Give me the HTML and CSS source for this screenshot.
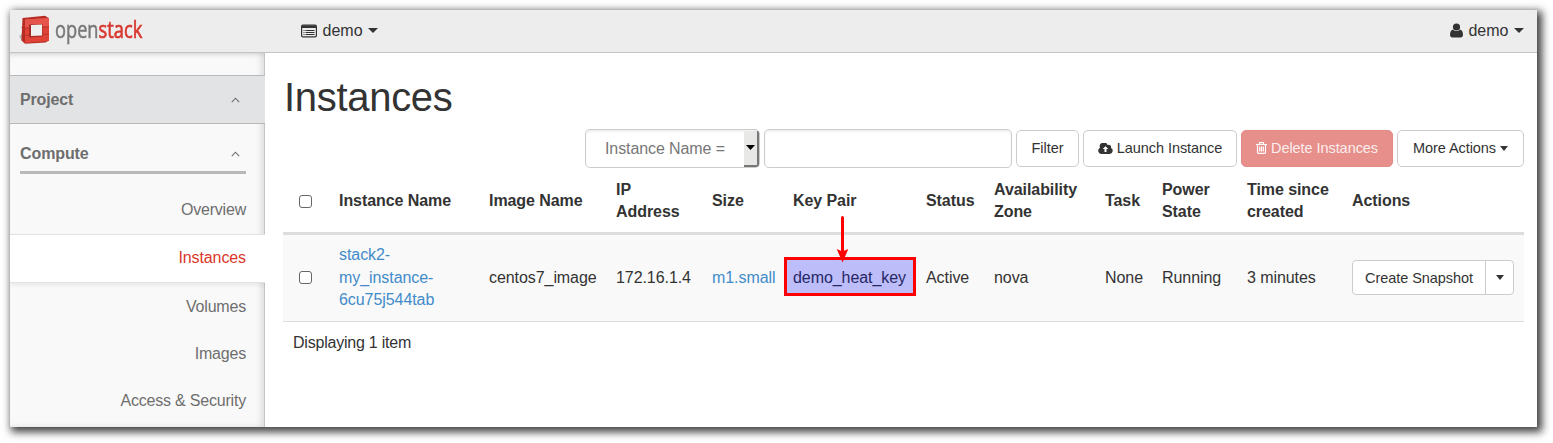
FILE: index.html
```html
<!DOCTYPE html>
<html lang="en">
<head>
<meta charset="utf-8">
<title>Instances - OpenStack Dashboard</title>
<link rel="stylesheet" href="styles.css">
</head>
<body>
<div class="window">
  <header class="topbar">
    <div class="brand">
      <svg class="brand-mark" width="32" height="30" viewBox="0 0 32 30">
        <path d="M0 21l5-2v8l-2-1z" fill="#b5b5b5"/>
        <path d="M3.500 3L26 0.800 30 3.200V25.500L26.500 27.500 6 28.800 2.500 25.500z" fill="#b62c24"/>
        <path d="M6 4.500L30 3V26L6 28z" fill="#df4236"/>
        <path d="M6 4.500L30 3V11L6 12z" fill="#e5554c"/>
        <path d="M10 9.500L23.500 9V21.500L10 22.500z" fill="#a82a22"/>
        <path d="M12 10L23 9.500V20.500L12 21z" fill="#efefef"/>
        <path d="M2.500 12.500L6 13.500 10 13M2.500 19.500L6 20.500 10 20M23.500 12.500L30 12M23.500 19.500L30 19" fill="none" stroke="#b8332a" stroke-width="1"/>
      </svg>
      <div class="brand-name"><span>open</span><span class="brand-red">stack</span></div>
    </div>
    <div class="menu project-menu">
      <svg width="16" height="14" viewBox="0 0 16 14"><rect x=".6" y="1.100" width="14.800" height="11.800" rx="1.300" fill="none" stroke="#333" stroke-width="1.200"/><path d="M1 1.500h14v2.500H1z" fill="#333"/><path d="M2.500 6.500h1M2.500 8.500h1M2.500 10.500h1M4.500 6.500h9M4.500 8.500h9M4.500 10.500h9" stroke="#333"/></svg>
      <span>demo</span><i class="caret"></i>
    </div>
    <div class="menu user-menu">
      <svg width="13" height="15" viewBox="0 0 13 15"><circle cx="6.500" cy="4" r="3.600" fill="#333"/><path d="M3 6.500C1 7 0 9 0 12c0 1.500 1 2.500 2.300 2.500h8.400C12 14.500 13 13.500 13 12c0-3-1-5-3-5.500C8 8.500 5 8.500 3 6.500z" fill="#333"/></svg>
      <span>demo</span><i class="caret"></i>
    </div>
  </header>
  <div class="body">
    <nav class="sidebar">
      <div class="group"><span>Project</span><svg width="9" height="6" viewBox="0 0 9 6"><path d="M.8 5.200L4.500 1.200 8.200 5.200" fill="none" stroke="#6e6e6e" stroke-width="1.100"/></svg></div>
      <div class="subgroup"><span>Compute</span><svg width="9" height="6" viewBox="0 0 9 6"><path d="M.8 5.200L4.500 1.200 8.200 5.200" fill="none" stroke="#6e6e6e" stroke-width="1.100"/></svg></div>
      <a class="item first">Overview</a>
      <a class="item active">Instances</a>
      <a class="item after">Volumes</a>
      <a class="item">Images</a>
      <a class="item">Access &amp; Security</a>
    </nav>
    <main class="content">
      <h1>Instances</h1>
      <div class="toolbar">
        <div class="select"><span>Instance Name =</span><div class="select-button"><svg width="9" height="5" viewBox="0 0 9 5"><path d="M0 0h9L4.500 5z"/></svg></div></div>
        <input class="search" type="text" aria-label="Search">
        <button class="btn filter">Filter</button>
        <button class="btn launch"><svg width="15" height="11" viewBox="0 0 15 11"><path d="M3.300 11A3.300 3.300 0 0 1 2 4.800 4 4 0 0 1 9.500 2 2.500 2.500 0 0 1 13 5 3.200 3.200 0 0 1 12 11z" fill="#333"/><path d="M7.500 3.200L4.700 6.100H6.500V9h2V6.100h1.800z" fill="#fff"/></svg><span>Launch Instance</span></button>
        <button class="btn danger"><svg width="11" height="12" viewBox="0 0 11 12"><path d="M0 2.500h11M3.500 2.300V.7h4v1.600M1.500 3v7.500q0 .8.800.8h6.400q.8 0 .8-.8V3M3.700 4.500v5M5.500 4.500v5M7.300 4.500v5" fill="none" stroke="#fff" stroke-width="1.200"/></svg><span>Delete Instances</span></button>
        <button class="btn more"><span>More Actions</span><i class="caret small"></i></button>
      </div>
      <table>
        <colgroup><col class="c-check"><col class="c-name"><col class="c-image"><col class="c-ip"><col class="c-size"><col class="c-key"><col class="c-status"><col class="c-zone"><col class="c-task"><col class="c-power"><col class="c-time"><col class="c-actions"></colgroup>
        <thead><tr>
          <th><i class="checkbox"></i></th><th>Instance Name</th><th>Image Name</th><th>IP<br>Address</th><th>Size</th><th>Key Pair</th><th>Status</th><th>Availability<br>Zone</th><th>Task</th><th>Power<br>State</th><th>Time since<br>created</th><th>Actions</th>
        </tr></thead>
        <tbody><tr>
          <td><i class="checkbox"></i></td>
          <td><a>stack2-<br>my_instance-<br>6cu75j544tab</a></td>
          <td>centos7_image</td><td>172.16.1.4</td><td><a>m1.small</a></td>
          <td class="key">demo_heat_key<div class="highlight"></div>
            <svg class="arrow" width="13" height="48" viewBox="0 0 13 48"><path d="M6.500 2.500V38" stroke="#f00" stroke-width="3" stroke-linecap="round"/><path d="M6.500 47.500L.7 34l5.800 2.500L12.300 34z" fill="#f00"/></svg></td>
          <td>Active</td><td>nova</td><td>None</td><td>Running</td><td>3 minutes</td>
          <td><div class="split"><button class="snapshot">Create Snapshot</button><button class="toggle" aria-label="More"><i class="caret small"></i></button></div></td>
        </tr></tbody>
      </table>
      <div class="count">Displaying 1 item</div>
    </main>
  </div>
</div>
</body>
</html>
```
FILE: styles.css
```css
* { box-sizing: border-box; }
body { margin: 0; padding: 10px; height: 443px; overflow: hidden; background: #fff; color: #333; font: 16px/22.86px "Liberation Sans", Arial, sans-serif; }
.window { width: 1527px; height: 417px; background: #fff; box-shadow: 3px 3px 8px 2px rgba(0,0,0,.75); display: flex; flex-direction: column; overflow: hidden; }
.topbar { height: 43px; flex: none; background: #ededed; border-bottom: 1px solid #c4c4c4; display: flex; align-items: center; padding: 0 13px 0 9px; }
.brand { display: flex; align-items: center; width: 282px; padding-bottom: 2px; }
.brand-mark { filter: blur(.3px); }
.brand-name { font: 24px/28px "Open Sans", sans-serif; color: #777; margin-left: 4px; padding-bottom: 2px; transform: scaleX(.76); transform-origin: 0 50%; white-space: nowrap; -webkit-text-stroke: .5px #777; }
.brand-red { color: #d9372f; -webkit-text-stroke: .7px #d9372f; }
.menu { display: flex; align-items: center; gap: 6px; }
.project-menu { gap: 5.500px; }
.user-menu { margin-left: auto; gap: 5.500px; }
.caret { width: 0; height: 0; border: 5px solid transparent; border-top-color: #333; border-bottom: 0; }
.caret.small { border-width: 5px 4.500px 0; }
.body { display: flex; flex: 1; min-height: 0; }
.sidebar { width: 255px; flex: none; padding-top: 22px; overflow: hidden; background: #f9f9f9; box-shadow: inset -1px 0 0 #c4c4c4, inset -4px 0 7px -1px rgba(0,0,0,.14), inset 0 4px 5px -3px rgba(0,0,0,.1); color: #6e6e6e; }
.group { height: 49px; background: #e2e3e5; border: solid #b9b9b9; border-width: 1px 0; display: flex; align-items: center; justify-content: space-between; padding: 1px 25px 0 10px; font-weight: bold; letter-spacing: -.15px; }
.subgroup { height: 50px; margin: 0 19px 0 10px; padding: 13px 6px 0 0; border-bottom: 3px solid #b9b9b9; display: flex; align-items: center; justify-content: space-between; font-weight: bold; letter-spacing: -.1px; }
.item { display: flex; align-items: center; justify-content: flex-end; height: 47px; padding: 2px 19px 0 0; letter-spacing: -.2px; }
.item.first { height: 60px; padding-top: 12px; }
.item.active { height: 49px; padding-top: 0; background: #fff; border: solid #e2e2e2; border-width: 1px 0; color: #d9372a; letter-spacing: -.1px; box-shadow: 0 2px 4px rgba(0,0,0,.07); }
.content { width: 1272px; padding: 21px 13px 0 18px; }
h1 { margin: 0; height: 55px; padding-left: 1px; font-weight: normal; font-size: 40px; line-height: 46px; letter-spacing: -.3px; }
.toolbar { display: flex; justify-content: flex-end; gap: 4px; height: 39px; }
.select, .search { height: 39px; border: 1px solid #ccc; border-radius: 5px; background: #fff; box-shadow: inset 0 2px 2px rgba(0,0,0,.06); }
.select { width: 175px; display: flex; justify-content: space-between; align-items: center; padding: 1px 0 1px 19px; color: #777; letter-spacing: -.1px; }
.select span { padding-top: 1px; }
.select-button { width: 15px; height: 36px; background: #e8e8e7; border: solid #777; border-width: 0 2px 2px 0; border-radius: 0 2px 3px 0; display: flex; align-items: center; justify-content: center; }
.search { width: 248px; }
.btn { height: 37px; margin-top: 1px; padding: 0 0 1px; border: 1px solid #ccc; border-radius: 5px; background: #fff; color: #333; font: 14.500px/20px "Liberation Sans", sans-serif; display: flex; align-items: center; justify-content: center; gap: 4px; white-space: nowrap; letter-spacing: -.06px; }
.filter { width: 63px; }
.launch { width: 154px; }
.danger { width: 152px; background: #e78f8b; border-color: #e58985; color: #fbeeee; }
.more { width: 127px; }
table { table-layout: fixed; border-collapse: separate; border-spacing: 0; width: 1241px; }
th, td { padding: 0 0 0 10px; text-align: left; vertical-align: middle; white-space: nowrap; letter-spacing: -.07px; }
th { height: 67px; padding-top: 2px; border-bottom: 3px solid #ddd; line-height: 22px; }
td { height: 87px; background: #f9f9f9; border-bottom: 1px solid #ddd; line-height: 22.500px; }
.c-check { width: 46px; } .c-name { width: 150px; } .c-image { width: 127px; } .c-ip { width: 96px; }
.c-size { width: 81px; } .c-key { width: 133px; } .c-status { width: 68px; } .c-zone { width: 111px; }
.c-task { width: 57px; } .c-power { width: 85px; } .c-time { width: 105px; } .c-actions { width: 182px; }
.checkbox { display: block; width: 13px; height: 13px; margin-left: 6px; border: 1px solid #666; border-radius: 3px; background: #fff; }
td .checkbox { position: relative; top: -1px; }
td a { color: #428bca; }
.key { position: relative; }
.highlight { position: absolute; left: 1px; top: 22px; width: 132px; height: 39px; border: 3px solid #f00; background: rgba(0,0,255,.24); }
.arrow { position: absolute; left: 53px; top: -20px; }
.split { display: flex; width: 162px; height: 35px; margin-bottom: 1px; border: 1px solid #ccc; border-radius: 4px; background: #fff; }
.split button { border: 0; padding: 0; background: none; color: #333; font: 14.500px/20px "Liberation Sans", sans-serif; letter-spacing: -.06px; }
.split .snapshot { width: 133px; border-right: 1px solid #ccc; }
.split .toggle { flex: 1; display: flex; align-items: center; justify-content: center; }
.count { padding: 10px; letter-spacing: -.22px; }
```
